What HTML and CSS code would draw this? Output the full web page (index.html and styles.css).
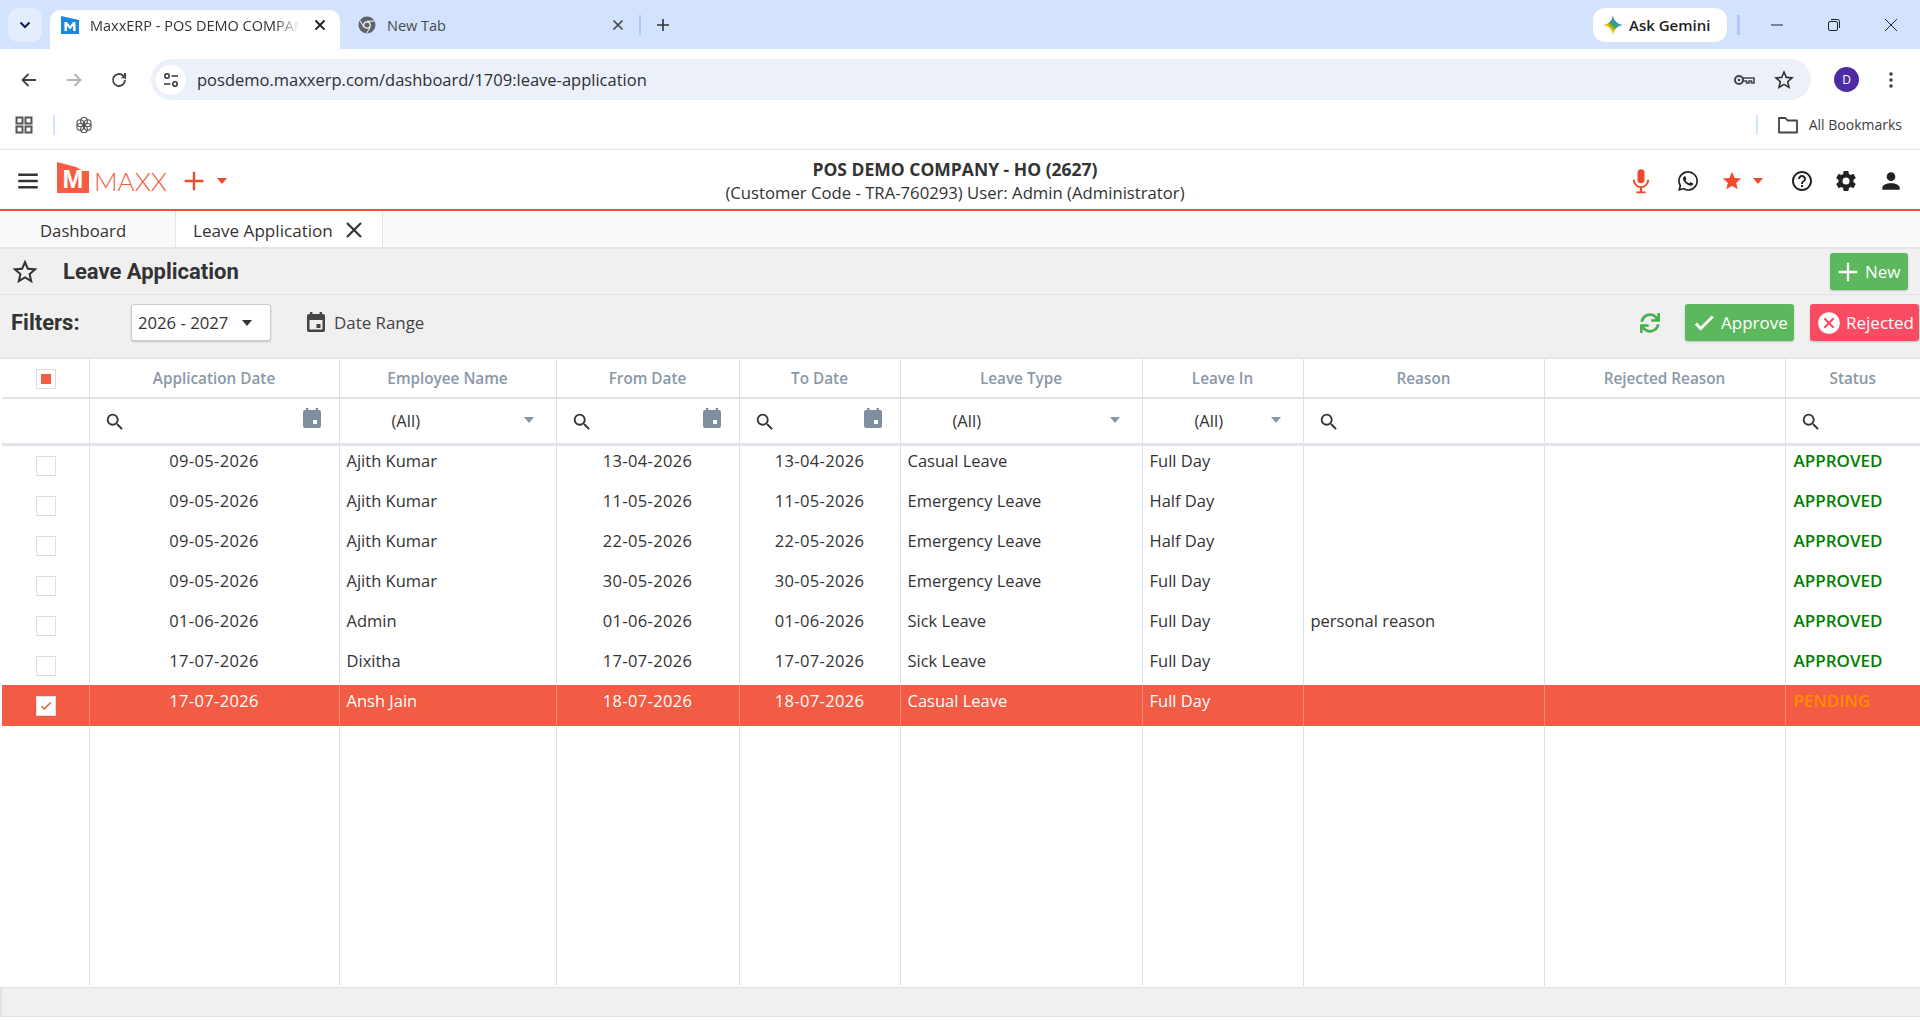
FILE: index.html
```html
<!DOCTYPE html>
<html lang="en">
<head>
    <meta charset="UTF-8">
    <meta name="viewport" content="width=device-width, initial-scale=1.0">
    <title>MaxxERP - Leave Application</title>
    <link rel="stylesheet" href="styles.css">
</head>
<body>
    <svg class="icon-defs" xmlns="http://www.w3.org/2000/svg">
        <symbol id="i-search" viewBox="0 0 24 24"><path d="M15.5 14h-.79l-.28-.27A6.471 6.471 0 0 0 16 9.5 6.5 6.5 0 1 0 9.5 16c1.61 0 3.09-.59 4.23-1.57l.27.28v.79l5 4.99L20.49 19l-4.99-5zm-6 0C7.01 14 5 11.99 5 9.5S7.01 5 9.5 5 14 7.01 14 9.5 11.99 14 9.5 14z"/></symbol>
        <symbol id="i-cal" viewBox="0 0 24 24"><path fill-rule="evenodd" d="M6 1h2.4v2h7.2V1H18v2h1a2 2 0 0 1 2 2v14a2 2 0 0 1-2 2H5a2 2 0 0 1-2-2V5a2 2 0 0 1 2-2h1V1zM13 13v4h4v-4h-4z"/></symbol>
        <symbol id="i-cal-line" viewBox="0 0 24 24"><path fill-rule="evenodd" d="M6 1h2.4v2h7.2V1H18v2h1a2 2 0 0 1 2 2v14a2 2 0 0 1-2 2H5a2 2 0 0 1-2-2V5a2 2 0 0 1 2-2h1V1zM5.5 9v9.5h13V9h-13zM12.5 13h4v4h-4v-4z"/></symbol>
        <symbol id="i-sync" viewBox="0 0 512 512"><path d="M440.65 12.57l4 82.77A247.16 247.16 0 0 0 255.83 8C134.73 8 33.91 94.92 12.29 209.82A12 12 0 0 0 24.09 224h49.05a12 12 0 0 0 11.67-9.26 175.91 175.91 0 0 1 317-56.94l-101.46-4.86a12 12 0 0 0-12.57 12v47.41a12 12 0 0 0 12 12H500a12 12 0 0 0 12-12V12a12 12 0 0 0-12-12h-47.37a12 12 0 0 0-11.98 12.57zM255.83 432a175.61 175.61 0 0 1-146-77.8l101.8 4.87a12 12 0 0 0 12.57-12v-47.4a12 12 0 0 0-12-12H12a12 12 0 0 0-12 12V500a12 12 0 0 0 12 12h47.35a12 12 0 0 0 12-12.6l-4.15-82.57A247.17 247.17 0 0 0 255.83 504c121.11 0 221.93-86.92 243.55-201.82a12 12 0 0 0-11.8-14.18h-49.05a12 12 0 0 0-11.67 9.26A175.86 175.86 0 0 1 255.83 432z"/></symbol>
        <symbol id="i-mic" viewBox="0 0 24 24"><path d="M12 2a3 3 0 0 1 3 3v6a3 3 0 0 1-3 3 3 3 0 0 1-3-3V5a3 3 0 0 1 3-3m7 9c0 3.53-2.61 6.44-6 6.93V21h3v1.6H8V21h3v-3.07c-3.39-.49-6-3.4-6-6.93h1.6a5.4 5.4 0 0 0 10.8 0H19z"/></symbol>
        <symbol id="i-whatsapp" viewBox="0 0 24 24"><path d="M12.04 2c-5.46 0-9.91 4.45-9.91 9.91 0 1.75.46 3.45 1.32 4.95L2.05 22l5.25-1.38c1.45.79 3.08 1.21 4.74 1.21 5.46 0 9.91-4.45 9.91-9.91 0-2.65-1.03-5.14-2.9-7.01A9.816 9.816 0 0 0 12.04 2m.01 1.67c2.2 0 4.26.86 5.82 2.42a8.225 8.225 0 0 1 2.41 5.83c0 4.54-3.7 8.23-8.24 8.23-1.48 0-2.93-.39-4.19-1.15l-.3-.17-3.12.82.83-3.04-.2-.32a8.188 8.188 0 0 1-1.26-4.38c.01-4.54 3.7-8.24 8.25-8.24M8.53 7.33c-.16 0-.43.06-.66.31-.22.25-.87.86-.87 2.07 0 1.22.89 2.39 1 2.56.14.17 1.76 2.67 4.25 3.73.59.27 1.05.42 1.41.53.59.19 1.13.16 1.56.1.48-.07 1.46-.6 1.67-1.18.21-.58.21-1.07.15-1.18-.07-.1-.23-.16-.48-.27-.25-.14-1.47-.74-1.69-.82-.23-.08-.37-.12-.56.12-.16.25-.64.81-.78.97-.15.17-.29.19-.53.07-.26-.13-1.06-.39-2-1.23-.74-.66-1.23-1.47-1.38-1.72-.12-.24-.01-.39.11-.5.11-.11.27-.29.37-.44.13-.14.17-.25.25-.41.08-.17.04-.31-.02-.43-.06-.11-.56-1.35-.77-1.84-.2-.48-.4-.42-.56-.43-.14 0-.3-.01-.47-.01z"/></symbol>
        <symbol id="i-star" viewBox="0 0 24 24"><path d="M12 17.27 18.18 21l-1.64-7.03L22 9.24l-7.19-.61L12 2 9.19 8.63 2 9.24l5.46 4.73L5.82 21 12 17.27z"/></symbol>
        <symbol id="i-star-line" viewBox="0 0 24 24"><path d="M22 9.24l-7.19-.62L12 2 9.19 8.63 2 9.24l5.46 4.73L5.82 21 12 17.27 18.18 21l-1.63-7.03L22 9.24zM12 15.4l-3.76 2.27 1-4.28-3.32-2.88 4.38-.38L12 6.1l1.71 4.04 4.38.38-3.32 2.88 1 4.28L12 15.4z"/></symbol>
        <symbol id="i-help" viewBox="0 0 24 24"><path d="M11 18h2v-2h-2v2zm1-16C6.48 2 2 6.48 2 12s4.48 10 10 10 10-4.48 10-10S17.52 2 12 2zm0 18c-4.41 0-8-3.59-8-8s3.59-8 8-8 8 3.59 8 8-3.59 8-8 8zm0-14c-2.21 0-4 1.79-4 4h2c0-1.1.9-2 2-2s2 .9 2 2c0 2-3 1.75-3 5h2c0-2.25 3-2.5 3-5 0-2.21-1.79-4-4-4z"/></symbol>
        <symbol id="i-gear" viewBox="0 0 24 24"><path d="M12 15.5A3.5 3.5 0 0 1 8.5 12 3.5 3.5 0 0 1 12 8.5a3.5 3.5 0 0 1 3.5 3.5 3.5 3.5 0 0 1-3.5 3.5m7.43-2.53c.04-.32.07-.64.07-.97 0-.33-.03-.66-.07-1l2.11-1.63c.19-.15.24-.42.12-.64l-2-3.46c-.12-.22-.39-.31-.61-.22l-2.49 1c-.52-.39-1.06-.73-1.69-.98l-.37-2.65A.506.506 0 0 0 14 2h-4c-.25 0-.46.18-.5.42l-.37 2.65c-.63.25-1.17.59-1.69.98l-2.49-1c-.22-.09-.49 0-.61.22l-2 3.46c-.13.22-.07.49.12.64L4.57 11c-.04.34-.07.67-.07 1 0 .33.03.65.07.97l-2.11 1.66c-.19.15-.25.42-.12.64l2 3.46c.12.22.39.3.61.22l2.49-1.01c.52.4 1.06.74 1.69.99l.37 2.65c.04.24.25.42.5.42h4c.25 0 .46-.18.5-.42l.37-2.65c.63-.26 1.17-.59 1.69-.99l2.49 1.01c.22.08.49 0 .61-.22l2-3.46c.12-.22.07-.49-.12-.64l-2.11-1.66z"/></symbol>
        <symbol id="i-person" viewBox="0 0 24 24"><path d="M12 4a4 4 0 0 1 4 4 4 4 0 0 1-4 4 4 4 0 0 1-4-4 4 4 0 0 1 4-4m0 10c4.42 0 8 1.79 8 4v2H4v-2c0-2.21 3.58-4 8-4z"/></symbol>
        <symbol id="i-check" viewBox="0 0 24 24"><path d="M21 7 9 19l-5.5-5.5 1.9-1.9L9 15.2 19.1 5.1 21 7z"/></symbol>
        <symbol id="i-cancel" viewBox="0 0 24 24"><path d="M12 2C6.47 2 2 6.47 2 12s4.47 10 10 10 10-4.47 10-10S17.53 2 12 2zm5 13.59L15.59 17 12 13.41 8.41 17 7 15.59 10.59 12 7 8.41 8.41 7 12 10.59 15.59 7 17 8.41 13.41 12 17 15.59z"/></symbol>
        <symbol id="i-plus" viewBox="0 0 24 24"><path d="M20 13h-7v7h-2v-7H4v-2h7V4h2v7h7v2z"/></symbol>
        <symbol id="i-close" viewBox="0 0 24 24"><path d="M5 5l14 14M19 5 5 19" fill="none" stroke="currentColor" stroke-width="2.2"/></symbol>
        <symbol id="i-menu" viewBox="0 0 24 24"><path d="M3 5h18v2.4H3zM3 10.8h18v2.4H3zM3 16.6h18V19H3z"/></symbol>
    </svg>

    <!-- browser chrome -->
    <div class="browser-tabs">
        <div class="tab-search">
            <svg class="ico-14" viewBox="0 0 14 14"><path d="M2.5 4.5 7 9l4.5-4.5" fill="none" stroke="#0b1f4a" stroke-width="2"/></svg>
        </div>
        <div class="browser-tab active">
            <svg class="ico-20" viewBox="0 0 20 20"><path d="M1 1l18 4v14H1z" fill="#1a88e0"/><path d="M4.5 16V7h2.4L10 11l3.1-4h2.4v9h-2.4v-5.2L10 14.6l-3.1-3.8V16z" fill="#fff"/></svg>
            <span class="tab-title fade">MaxxERP - POS DEMO COMPAN</span>
            <svg class="ico-12 tab-x" viewBox="0 0 12 12"><path d="M1.5 1.5l9 9M10.500 1.500l-9 9" stroke="#1f1f1f" stroke-width="1.800" fill="none"/></svg>
        </div>
        <div class="browser-tab">
            <svg class="ico-20" viewBox="0 0 20 20"><circle cx="10" cy="10" r="8.500" fill="#5f6368"/><circle cx="10" cy="10" r="3.800" fill="#fff"/><circle cx="10" cy="10" r="2.600" fill="#5f6368"/><path d="M10 6.200h7.200M6.700 12l-3.600-6.200M13.300 12l-3.600 6.200" stroke="#fff" stroke-width="1"/></svg>
            <span class="tab-title muted">New Tab</span>
            <svg class="ico-12 tab-x" viewBox="0 0 12 12"><path d="M1.500 1.500l9 9M10.500 1.500l-9 9" stroke="#444" stroke-width="1.600" fill="none"/></svg>
        </div>
        <span class="tab-sep"></span>
        <svg class="ico-14 new-tab" viewBox="0 0 14 14"><path d="M7 1v12M1 7h12" stroke="#333" stroke-width="1.600"/></svg>
        <div class="tabs-right">
            <div class="gemini">
                <svg class="ico-20" viewBox="0 0 20 20">
                    <defs><linearGradient id="gem" x1="0" y1="1" x2="1" y2="0"><stop offset="0" stop-color="#ea4335"/><stop offset=".35" stop-color="#fbbc04"/><stop offset=".5" stop-color="#34a853"/><stop offset=".7" stop-color="#4285f4"/><stop offset="1" stop-color="#4285f4"/></linearGradient></defs>
                    <path d="M10 0c.6 5.500 4.500 9.400 10 10-5.500.6-9.400 4.500-10 10-.6-5.500-4.500-9.400-10-10 5.500-.6 9.400-4.500 10-10z" fill="url(#gem)"/>
                </svg>
                <span>Ask Gemini</span>
            </div>
            <span class="tab-sep wide"></span>
            <div class="win-btns">
                <svg class="ico-14" viewBox="0 0 14 14"><path d="M1 7h12" stroke="#222" stroke-width="1"/></svg>
                <svg class="ico-14" viewBox="0 0 14 14"><rect x="1.500" y="3.500" width="9" height="9" rx="1.500" fill="none" stroke="#222"/><path d="M4 1.500h6.500a2 2 0 0 1 2 2V10" fill="none" stroke="#222"/></svg>
                <svg class="ico-14" viewBox="0 0 14 14"><path d="M1 1l12 12M13 1 1 13" stroke="#222" stroke-width="1"/></svg>
            </div>
        </div>
    </div>

    <div class="browser-toolbar">
        <svg class="ico-20 nav" viewBox="0 0 20 20"><path d="M17 10H4M9.500 4 3.500 10l6 6" fill="none" stroke="#444" stroke-width="1.800"/></svg>
        <svg class="ico-20 nav" viewBox="0 0 20 20"><path d="M3 10h13M10.500 4l6 6-6 6" fill="none" stroke="#b0b3b8" stroke-width="1.800"/></svg>
        <svg class="ico-20 nav" viewBox="0 0 20 20"><path d="M16 10a6 6 0 1 1-1.800-4.300L16 7.500V3" fill="none" stroke="#444" stroke-width="1.800"/><path d="M16.800 8.200h-5l5-5z" fill="#444"/></svg>
        <div class="omnibox">
            <span class="site-info">
                <svg class="ico-18" viewBox="0 0 18 18"><circle cx="5" cy="5" r="2.200" fill="none" stroke="#333" stroke-width="1.500"/><path d="M9.500 5H16M2 13h6.500" stroke="#333" stroke-width="1.500"/><circle cx="13" cy="13" r="2.200" fill="none" stroke="#333" stroke-width="1.500"/></svg>
            </span>
            <span class="url">posdemo.maxxerp.com/dashboard/1709:leave-application</span>
            <svg class="ico-24 omni-key" viewBox="0 0 24 24"><circle cx="7" cy="12" r="4" fill="none" stroke="#444" stroke-width="2"/><circle cx="7" cy="12" r="1.300" fill="#444"/><path d="M11 10h11v5h-2.500v-2H17v2h-2.500v-2H11z" fill="none" stroke="#444" stroke-width="1.600"/></svg>
            <svg class="ico-24 omni-star" viewBox="0 0 24 24"><use href="#i-star-line"/></svg>
        </div>
        <span class="avatar">D</span>
        <svg class="ico-20 dots" viewBox="0 0 20 20"><circle cx="10" cy="4" r="1.800" fill="#444"/><circle cx="10" cy="10" r="1.800" fill="#444"/><circle cx="10" cy="16" r="1.800" fill="#444"/></svg>
    </div>

    <div class="bookmarks">
        <svg class="ico-18" viewBox="0 0 18 18"><path d="M1.500 1.500h6v6h-6zM10.500 1.500h6v6h-6zM1.500 10.500h6v6h-6zM10.500 10.500h6v6h-6z" fill="none" stroke="#555" stroke-width="2"/></svg>
        <span class="bm-sep"></span>
        <svg class="ico-18 knot" viewBox="0 0 24 24"><circle cx="12" cy="6.500" r="4.500"/><circle cx="12" cy="17.500" r="4.500"/><circle cx="7" cy="9.500" r="4.500"/><circle cx="17" cy="9.500" r="4.500"/><circle cx="7" cy="14.500" r="4.500"/><circle cx="17" cy="14.500" r="4.500"/></svg>
        <div class="bm-right">
            <span class="bm-sep"></span>
            <svg class="ico-24 folder" viewBox="0 0 24 24"><path d="M3 5h6.500l2 2.500H21v12H3z" fill="none" stroke="#444" stroke-width="1.800" stroke-linejoin="round"/></svg>
            <span class="bm-label">All Bookmarks</span>
        </div>
    </div>

    <!-- app header -->
    <header class="app-header">
        <div class="head-left">
            <svg class="ico-26 burger" viewBox="0 0 24 24"><use href="#i-menu"/></svg>
            <svg class="logo-mark" viewBox="0 0 32 31" xmlns="http://www.w3.org/2000/svg">
                <path d="M0 0l19 5 7 4h6v22H0z" fill="#f45c43"/>
                <text x="16" y="26" text-anchor="middle" class="logo-m">M</text>
            </svg>
            <span class="logo-text">MAXX</span>
            <svg class="ico-28 add" viewBox="0 0 24 24"><use href="#i-plus"/></svg>
            <span class="caret red"></span>
        </div>
        <div class="head-center">
            <div class="company">POS DEMO COMPANY - HO (2627)</div>
            <div class="customer">(Customer Code - TRA-760293) User: Admin (Administrator)</div>
        </div>
        <div class="head-right">
            <svg class="ico-28 red-fill" viewBox="0 0 24 24"><use href="#i-mic"/></svg>
            <svg class="ico-24 wa" viewBox="0 0 24 24"><use href="#i-whatsapp"/></svg>
            <span class="star-group">
                <svg class="ico-22 red-fill" viewBox="0 0 24 24"><use href="#i-star"/></svg>
                <span class="caret red"></span>
            </span>
            <svg class="ico-24" viewBox="0 0 24 24"><use href="#i-help"/></svg>
            <svg class="ico-24" viewBox="0 0 24 24"><use href="#i-gear"/></svg>
            <svg class="ico-26" viewBox="0 0 24 24"><use href="#i-person"/></svg>
        </div>
    </header>

    <nav class="page-tabs">
        <div class="page-tab first">Dashboard</div>
        <div class="page-tab current">Leave Application <svg class="ico-24 page-x" viewBox="0 0 24 24"><use href="#i-close"/></svg></div>
    </nav>

    <div class="title-bar">
        <svg class="ico-30" viewBox="0 0 24 24"><use href="#i-star-line"/></svg>
        <h1>Leave Application</h1>
        <button class="btn btn-green btn-new"><svg class="ico-28" viewBox="0 0 24 24"><use href="#i-plus"/></svg>New</button>
    </div>

    <div class="filter-bar">
        <span class="filter-label">Filters:</span>
        <div class="year-select">2026 - 2027 <span class="caret dark"></span></div>
        <div class="date-range">
            <svg class="ico-24" viewBox="0 0 24 24"><use href="#i-cal-line"/></svg>
            <span>Date Range</span>
        </div>
        <div class="filter-actions">
            <svg class="ico-20 sync" viewBox="0 0 512 512"><use href="#i-sync"/></svg>
            <button class="btn btn-green"><svg class="ico-26" viewBox="0 0 24 24"><use href="#i-check"/></svg>Approve</button>
            <button class="btn btn-red"><svg class="ico-26" viewBox="0 0 24 24"><use href="#i-cancel"/></svg>Rejected</button>
        </div>
    </div>

    <!-- grid -->
    <table class="grid">
        <colgroup>
            <col class="c0"><col class="c1"><col class="c2"><col class="c3"><col class="c4"><col class="c5"><col class="c6"><col class="c7"><col class="c8"><col class="c9">
        </colgroup>
        <thead>
            <tr class="head-row">
                <th><span class="check partial"></span></th>
                <th>Application Date</th>
                <th>Employee Name</th>
                <th>From Date</th>
                <th>To Date</th>
                <th>Leave Type</th>
                <th>Leave In</th>
                <th>Reason</th>
                <th>Rejected Reason</th>
                <th>Status</th>
            </tr>
            <tr class="filter-row">
                <td></td>
                <td><div class="fcell"><svg class="ico-22" viewBox="0 0 24 24"><use href="#i-search"/></svg><svg class="ico-24 cal" viewBox="0 0 24 24"><use href="#i-cal"/></svg></div></td>
                <td><div class="fcell sel"><span>(All)</span><span class="caret grey"></span></div></td>
                <td><div class="fcell"><svg class="ico-22" viewBox="0 0 24 24"><use href="#i-search"/></svg><svg class="ico-24 cal" viewBox="0 0 24 24"><use href="#i-cal"/></svg></div></td>
                <td><div class="fcell"><svg class="ico-22" viewBox="0 0 24 24"><use href="#i-search"/></svg><svg class="ico-24 cal" viewBox="0 0 24 24"><use href="#i-cal"/></svg></div></td>
                <td><div class="fcell sel"><span>(All)</span><span class="caret grey"></span></div></td>
                <td><div class="fcell sel"><span>(All)</span><span class="caret grey"></span></div></td>
                <td><div class="fcell"><svg class="ico-22" viewBox="0 0 24 24"><use href="#i-search"/></svg></div></td>
                <td></td>
                <td><div class="fcell"><svg class="ico-22" viewBox="0 0 24 24"><use href="#i-search"/></svg></div></td>
            </tr>
        </thead>
        <tbody>
            <tr>
                <td class="chk"><span class="check"></span></td><td class="ctr">09-05-2026</td><td>Ajith Kumar</td><td class="ctr">13-04-2026</td><td class="ctr">13-04-2026</td><td>Casual Leave</td><td>Full Day</td><td></td><td></td><td class="approved">APPROVED</td>
            </tr>
            <tr>
                <td class="chk"><span class="check"></span></td><td class="ctr">09-05-2026</td><td>Ajith Kumar</td><td class="ctr">11-05-2026</td><td class="ctr">11-05-2026</td><td>Emergency Leave</td><td>Half Day</td><td></td><td></td><td class="approved">APPROVED</td>
            </tr>
            <tr>
                <td class="chk"><span class="check"></span></td><td class="ctr">09-05-2026</td><td>Ajith Kumar</td><td class="ctr">22-05-2026</td><td class="ctr">22-05-2026</td><td>Emergency Leave</td><td>Half Day</td><td></td><td></td><td class="approved">APPROVED</td>
            </tr>
            <tr>
                <td class="chk"><span class="check"></span></td><td class="ctr">09-05-2026</td><td>Ajith Kumar</td><td class="ctr">30-05-2026</td><td class="ctr">30-05-2026</td><td>Emergency Leave</td><td>Full Day</td><td></td><td></td><td class="approved">APPROVED</td>
            </tr>
            <tr>
                <td class="chk"><span class="check"></span></td><td class="ctr">01-06-2026</td><td>Admin</td><td class="ctr">01-06-2026</td><td class="ctr">01-06-2026</td><td>Sick Leave</td><td>Full Day</td><td>personal reason</td><td></td><td class="approved">APPROVED</td>
            </tr>
            <tr>
                <td class="chk"><span class="check"></span></td><td class="ctr">17-07-2026</td><td>Dixitha</td><td class="ctr">17-07-2026</td><td class="ctr">17-07-2026</td><td>Sick Leave</td><td>Full Day</td><td></td><td></td><td class="approved">APPROVED</td>
            </tr>
            <tr class="selected">
                <td class="chk"><span class="check on"><svg class="ico-14" viewBox="0 0 24 24"><use href="#i-check"/></svg></span></td><td class="ctr">17-07-2026</td><td>Ansh Jain</td><td class="ctr">18-07-2026</td><td class="ctr">18-07-2026</td><td>Casual Leave</td><td>Full Day</td><td></td><td></td><td class="pending">PENDING</td>
            </tr>
            <tr class="filler">
                <td></td><td></td><td></td><td></td><td></td><td></td><td></td><td></td><td></td><td></td>
            </tr>
        </tbody>
    </table>
    <div class="grid-footer"></div>
</body>
</html>
```

FILE: styles.css
```css
* {
    box-sizing: border-box;
}
html, body {
    margin: 0;
    height: 1020px;
    overflow: hidden;
    background: #fff;
    color: #333;
    font-family: "Open Sans", "Noto Sans", sans-serif;
}
.icon-defs {
    display: none;
}
svg {
    display: block;
    flex: none;
    fill: currentColor;
}
.ico-12 { width: 12px; height: 12px; }
.ico-14 { width: 14px; height: 14px; }
.ico-18 { width: 18px; height: 18px; }
.ico-20 { width: 20px; height: 20px; }
.ico-22 { width: 22px; height: 22px; }
.ico-24 { width: 24px; height: 24px; }
.ico-26 { width: 26px; height: 26px; }
.ico-28 { width: 28px; height: 28px; }
.ico-30 { width: 30px; height: 30px; }

/* browser chrome */
.browser-tabs {
    display: flex;
    align-items: flex-end;
    height: 49px;
    padding-left: 8px;
    background: #d3e3fd;
}
.tab-search {
    display: flex;
    align-items: center;
    justify-content: center;
    width: 34px;
    height: 34px;
    margin: 0 8px 7px 0;
    border-radius: 10px;
    background: #e4edfc;
}
.browser-tab {
    display: flex;
    align-items: center;
    width: 290px;
    height: 39px;
    padding: 0 14px 9px 10px;
    border-radius: 10px 10px 0 0;
    font-size: 14.5px;
}
.browser-tab.active {
    background: #fff;
    color: #1f1f1f;
}
.browser-tab + .browser-tab {
    width: 299px;
    padding-left: 17px;
    padding-right: 15px;
}
.tab-title {
    flex: 1;
    margin-left: 10px;
    white-space: nowrap;
    color: #333;
}
.tab-title.fade {
    -webkit-mask-image: linear-gradient(to right, #000 88%, transparent 100%);
    mask-image: linear-gradient(to right, #000 88%, transparent 100%);
    flex: none;
    width: 210px;
    margin-right: auto;
}
.tab-title.muted {
    color: #47494d;
}
.tab-sep {
    width: 2px;
    height: 20px;
    margin: 0 0 14px 0;
    background: #a8c7fa;
}
.new-tab {
    margin: 0 0 17px 15px;
}
.tabs-right {
    display: flex;
    align-items: center;
    align-self: flex-start;
    height: 34px;
    margin: 8px 0 0 auto;
}
.gemini {
    display: flex;
    align-items: center;
    gap: 6px;
    width: 134px;
    height: 34px;
    padding-left: 10px;
    border-radius: 12px;
    background: #fff;
    color: #1f1f1f;
    font-size: 15px;
    font-weight: 600;
}
.tab-sep.wide {
    width: 3px;
    height: 20px;
    margin: 0 0 0 10px;
}
.win-btns {
    display: flex;
    align-items: center;
    gap: 43px;
    padding: 0 22px 0 30px;
}

.browser-toolbar {
    display: flex;
    align-items: center;
    height: 51px;
    padding: 10px 0 0 19px;
    background: #fff;
}
.nav {
    margin-right: 25px;
}
.omnibox {
    display: flex;
    align-items: center;
    width: 1660px;
    height: 41px;
    margin-left: -3px;
    border-radius: 21px;
    background: #ebf0f9;
}
.site-info {
    display: flex;
    align-items: center;
    justify-content: center;
    width: 30px;
    height: 30px;
    margin-left: 5px;
    border-radius: 50%;
    background: #fff;
}
.url {
    margin-left: 11px;
    font-size: 16.5px;
    color: #2d2f33;
}
.omni-key {
    margin-left: auto;
}
.omni-star {
    margin: 0 15px 0 16px;
}
.avatar {
    display: flex;
    align-items: center;
    justify-content: center;
    width: 25px;
    height: 25px;
    margin-left: 23px;
    border-radius: 50%;
    background: #4f2ba3;
    color: #fff;
    font-size: 12px;
}
.dots {
    margin-left: 22px;
}

.bookmarks {
    display: flex;
    align-items: center;
    height: 50px;
    padding: 0 18px 0 15px;
    border-bottom: 1px solid #e6e6e6;
}
.bm-sep {
    width: 2px;
    height: 20px;
    margin: 0 20px 0 20px;
    background: #d3e3fd;
}
.knot {
    fill: none;
    stroke: #555;
    stroke-width: 1.5;
}
.bm-right {
    display: flex;
    align-items: center;
    margin-left: auto;
}
.bm-right .bm-sep {
    margin: 0 18px 0 0;
}
.bm-label {
    margin-left: 9px;
    font-size: 14px;
    color: #3c4043;
}

/* app header */
.app-header {
    display: flex;
    align-items: center;
    height: 61px;
    padding: 2px 16px 0 15px;
    border-bottom: 2px solid #f1503a;
    box-shadow: 0 1px 2px rgba(0, 0, 0, .2);
}
.head-left {
    display: flex;
    align-items: center;
    width: 705px;
}
.burger {
    color: #333;
    margin-right: 16px;
}
.logo-mark {
    width: 32px;
    height: 31px;
    margin-top: -6px;
}
.logo-m {
    fill: #fff;
    font-family: "Liberation Sans", sans-serif;
    font-size: 25px;
    font-weight: 700;
}
.logo-text {
    margin-left: 5px;
    font-family: Lato, sans-serif;
    font-size: 26px;
    font-weight: 300;
    color: #f15a42;
}
.add {
    margin-left: 13px;
    color: #f1492c;
}
.caret {
    display: inline-block;
    width: 0;
    height: 0;
    border-left: 5.5px solid transparent;
    border-right: 5.5px solid transparent;
    border-top: 6px solid #333;
}
.caret.red { border-top-color: #f1492c; }
.caret.grey { border-top-color: #8696a6; }
.head-left .caret {
    margin-left: 9px;
}
.head-center {
    width: 470px;
    text-align: center;
    font-size: 16.7px;
    line-height: 24px;
    color: #333;
    white-space: nowrap;
}
.company {
    font-size: 17.5px;
    font-weight: 700;
}
.head-right {
    display: flex;
    align-items: center;
    margin-left: auto;
    color: #222;
}
.red-fill {
    color: #f1492c;
}
.head-right > svg + svg {
    margin-left: 20px;
}
.head-right > .wa {
    margin-left: 21px;
}
.head-right > span + svg {
    margin-left: 27px;
}
.star-group {
    display: flex;
    align-items: center;
    margin-left: 21px;
}
.star-group .caret {
    margin-left: 10px;
}

.page-tabs {
    display: flex;
    height: 38px;
    background: #fafafa;
    border-bottom: 2px solid #e2e5e9;
    padding-left: 2px;
    font-size: 17.1px;
}
.page-tab {
    display: flex;
    align-items: center;
    height: 36px;
    padding-top: 2px;
    color: #333;
}
.page-tab.first {
    width: 174px;
    padding-left: 38px;
    border-right: 1px solid #e2e5e9;
    font-size: 16.7px;
}
.page-tab.current {
    width: 207px;
    padding-left: 17px;
    background: #fff;
    border-right: 1px solid #e2e5e9;
}
.page-x {
    margin-left: 9px;
}

.title-bar {
    display: flex;
    align-items: center;
    height: 46px;
    padding: 0 12px 0 10px;
    background: #f0f0f0;
    border-bottom: 1px solid #dfe2e6;
    color: #333;
}
.title-bar h1 {
    margin: 0 0 0 23px;
    font-family: Roboto, sans-serif;
    font-size: 22px;
    font-weight: 700;
    color: #333;
}
.btn {
    display: flex;
    align-items: center;
    height: 37px;
    border: 0;
    border-radius: 3px;
    color: #fff;
    font-family: inherit;
    font-size: 17px;
    box-shadow: 0 1px 2px rgba(0, 0, 0, .2);
}
.btn-green { background: #5cb85c; }
.btn-red { background: #f94c63; }
.btn-new {
    width: 78px;
    margin-left: auto;
    padding: 0 2px 0 4px;
    gap: 3px;
}
.filter-bar {
    display: flex;
    align-items: center;
    height: 64px;
    padding: 0 0 7px 11px;
    background: #f0f0f0;
    border-bottom: 2px solid #e2e5e9;
    color: #333;
}
.filter-label {
    width: 120px;
    font-family: Roboto, sans-serif;
    font-size: 22px;
    font-weight: 700;
    color: #333;
}
.year-select {
    display: flex;
    align-items: center;
    justify-content: space-between;
    width: 140px;
    height: 37px;
    padding: 0 18px 0 6px;
    background: #fff;
    border: 1px solid #ccc;
    border-radius: 3px;
    box-shadow: 0 1px 2px rgba(0, 0, 0, .2);
    font-size: 16.7px;
}
.date-range {
    display: flex;
    align-items: center;
    gap: 6px;
    margin-left: 33px;
    font-size: 16.9px;
    color: #444;
}
.filter-actions {
    display: flex;
    align-items: center;
    gap: 16px;
    margin-left: auto;
    padding-right: 1px;
}
.filter-actions .btn {
    width: 109px;
    gap: 4px;
    padding: 0 0 0 6px;
}
.sync {
    margin: 0 9px 0 3px;
    color: #4caf50;
}

/* grid */
.grid {
    width: 1918px;
    margin-left: 2px;
    table-layout: fixed;
    border-collapse: collapse;
    background: #fff;
    font-size: 16.500px;
    color: #333;
}
.c0 { width: 87px; }
.c1 { width: 250px; }
.c2 { width: 217px; }
.c3 { width: 183px; }
.c4 { width: 161px; }
.c5 { width: 242px; }
.c6 { width: 161px; }
.c7 { width: 241px; }
.c8 { width: 241px; }
.c9 { width: 135px; }
.grid th,
.grid td {
    padding: 0 0 0 7px;
    border-left: 1px solid #dcdfe3;
    white-space: nowrap;
}
.grid th:first-child,
.grid td:first-child {
    border-left: 0;
    padding: 0 0 0 2px;
    text-align: center;
}
.head-row {
    height: 39px;
    border-bottom: 2px solid #e0e3e7;
}
.head-row th {
    padding: 0;
    text-align: center;
    font-size: 15.3px;
    font-weight: 600;
    color: #8a98a8;
}
.filter-row {
    height: 46px;
    border-bottom: 3px solid #e0e3e7;
}
.fcell {
    display: flex;
    align-items: center;
    justify-content: space-between;
    padding: 2px 15px 0 7px;
}
.fcell.sel {
    padding: 0 22px 0 45px;
}
.fcell.sel .caret {
    margin-top: -2px;
}
.cal {
    margin-top: -5px;
    color: #7f8fa0;
}
.grid tbody tr {
    height: 40px;
}
.grid tbody tr:first-child {
    height: 41px;
}
.grid tbody td {
    padding-bottom: 10px;
}
.grid tbody td.chk {
    padding: 0 0 2px 2px;
}
.grid tbody td.ctr {
    padding-left: 0;
    text-align: center;
    letter-spacing: .35px;
}
.check {
    display: inline-block;
    width: 20px;
    height: 20px;
    border: 1px solid #dedede;
    background: #fff;
    vertical-align: middle;
}
.check.partial {
    position: relative;
}
.check.partial::after {
    content: "";
    position: absolute;
    left: 4px;
    top: 4px;
    width: 10px;
    height: 10px;
    background: #f45c43;
}
.check.on {
    display: inline-flex;
    align-items: center;
    justify-content: center;
    color: #f25c44;
}
.grid td.approved,
.grid td.pending {
    padding-left: 8px;
    font-size: 17px;
    font-weight: 600;
}
.approved {
    color: #008000;
}
.pending {
    color: #ff8c00;
}
.grid tbody tr.selected {
    height: 41px;
    background: #f25c44;
    color: #fff;
}
.selected td {
    border-left-color: #f88a78;
}
.grid tbody tr.filler {
    height: 260px;
}
.grid-footer {
    height: 30px;
    margin-top: 1px;
    background: #f0f0f0;
    border-top: 1px solid #dfe2e6;
    border-bottom: 1px solid #dfe2e6;
    border-left: 2px solid #dfe2e6;
}
```
